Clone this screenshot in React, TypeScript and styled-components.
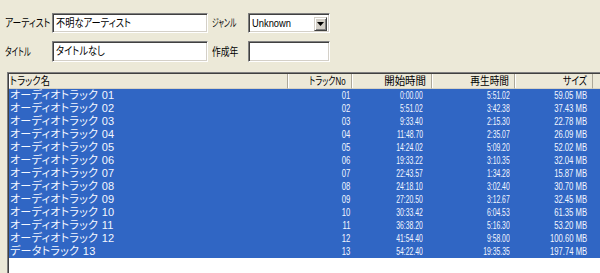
import styled, { createGlobalStyle } from "styled-components"

const GlobalStyle = createGlobalStyle`
    html, body {
        margin: 0;
        padding: 0;
        background-color: #ECE9D8;
    }
`

const Page = styled.div`
    width: 600px;
    height: 273px;
    overflow: hidden;
    padding-top: 13px;
    box-sizing: border-box;
    background-color: #ECE9D8;
    font-family: "Liberation Sans", "Noto Sans CJK JP", sans-serif;
    font-size: 11px;
    font-feature-settings: "palt";
    color: #000;
`

const Form = styled.div`
    display: grid;
    grid-template-columns: 47px 156px 40px 82px;
    grid-auto-rows: 20px 21px;
    row-gap: 8px;
    padding-left: 5px;
    align-items: center;
`

const Label = styled.div<{ $indent?: number }>`
    padding-left: ${p => p.$indent ?? 0}px;
    white-space: nowrap;
    line-height: 14px;
`

// the old UI font is much narrower than anything installed, so text gets squeezed
const Squeeze = styled.span<{ $scale?: number; $origin?: "left" | "right" }>`
    display: inline-block;
    white-space: nowrap;
    transform: scaleX(${p => p.$scale ?? 0.84});
    transform-origin: ${p => p.$origin ?? "left"} center;
`

const TextBox = styled.div`
    height: 100%;
    box-sizing: border-box;
    background: #fff;
    border-top: 1px solid #808080;
    border-left: 1px solid #808080;
    border-right: 1px solid #fff;
    border-bottom: 1px solid #fff;
    box-shadow: inset 1px 1px 0 #404040, inset -1px -1px 0 #D4D0C8;
    padding: 2px 0 0 3px;
    line-height: 14px;
    white-space: nowrap;
    overflow: hidden;
`

const Combo = styled(TextBox)`
    display: flex;
    align-items: center;
    justify-content: space-between;
    padding: 0 2px 0 3px;
`

const DropButton = styled.div`
    width: 13px;
    height: 14px;
    margin-top: 1px;
    box-sizing: border-box;
    background: #D4D0C8;
    border-top: 1px solid #D4D0C8;
    border-left: 1px solid #D4D0C8;
    border-right: 1px solid #404040;
    border-bottom: 1px solid #404040;
    box-shadow: inset 1px 1px 0 #fff, inset -1px -1px 0 #808080;
    display: flex;
    align-items: center;
    justify-content: center;
`

const ListView = styled.div`
    margin: 10px 0 0 7px;
    width: 610px;
    height: 220px;
    box-sizing: border-box;
    background: #fff;
    border-top: 1px solid #808080;
    border-left: 1px solid #808080;
    box-shadow: inset 1px 1px 0 #404040;
    padding: 1px 0 0 1px;
`

const Row = styled.div<{ $header?: boolean }>`
    display: grid;
    grid-template-columns: 279px 64px 80px 83px 78px 1fr;
    height: ${p => (p.$header ? 15 : 13)}px;
    line-height: 13px;
    background: ${p => (p.$header ? "#ECE9D8" : "#3066C4")};
    color: ${p => (p.$header ? "#000" : "#F4F7FF")};
    white-space: nowrap;
`

const HeadCell = styled.div<{ $align?: "left" | "right"; $pad?: number }>`
    box-sizing: border-box;
    height: 15px;
    padding: 1px ${p => p.$pad ?? 5}px 0 1px;
    text-align: ${p => p.$align ?? "right"};
    border-right: 1px solid #ACA899;
    border-bottom: 1px solid #D6D2C2;
    box-shadow: inset 1px 0 0 #fff;
    overflow: hidden;
`

const HeadFiller = styled.div`
    height: 15px;
    box-sizing: border-box;
    border-bottom: 1px solid #D6D2C2;
`

const Cell = styled.div<{ $pad?: number }>`
    text-align: right;
    padding: 0 ${p => p.$pad ?? 5}px 0 1px;
`

const NameCell = styled.div`
    padding-left: 1px;
    letter-spacing: 0.3px;
`

const tracks = [
    ["オーディオトラック 01", "01", "0:00.00", "5:51.02", "59.05 MB"],
    ["オーディオトラック 02", "02", "5:51.02", "3:42.38", "37.43 MB"],
    ["オーディオトラック 03", "03", "9:33.40", "2:15.30", "22.78 MB"],
    ["オーディオトラック 04", "04", "11:48.70", "2:35.07", "26.09 MB"],
    ["オーディオトラック 05", "05", "14:24.02", "5:09.20", "52.02 MB"],
    ["オーディオトラック 06", "06", "19:33.22", "3:10.35", "32.04 MB"],
    ["オーディオトラック 07", "07", "22:43.57", "1:34.28", "15.87 MB"],
    ["オーディオトラック 08", "08", "24:18.10", "3:02.40", "30.70 MB"],
    ["オーディオトラック 09", "09", "27:20.50", "3:12.67", "32.45 MB"],
    ["オーディオトラック 10", "10", "30:33.42", "6:04.53", "61.35 MB"],
    ["オーディオトラック 11", "11", "36:38.20", "5:16.30", "53.20 MB"],
    ["オーディオトラック 12", "12", "41:54.40", "9:58.00", "100.60 MB"],
    ["データトラック 13", "13", "54:22.40", "19:35.35", "197.74 MB"],
]

export default function App() {
    return (
        <Page>
            <GlobalStyle />
            <Form>
                <Label><Squeeze $scale={0.8}>アーティスト</Squeeze></Label>
                <TextBox><Squeeze>不明なアーティスト</Squeeze></TextBox>
                <Label $indent={4}><Squeeze $scale={0.62}>ジャンル</Squeeze></Label>
                <Combo>
                    <Squeeze $scale={0.85}>Unknown</Squeeze>
                    <DropButton>
                        <svg width="7" height="4" viewBox="0 0 7 4">
                            <path d="M0 0h7L3.5 4z" fill="#000" />
                        </svg>
                    </DropButton>
                </Combo>
                <Label><Squeeze $scale={0.68}>タイトル</Squeeze></Label>
                <TextBox><Squeeze>タイトルなし</Squeeze></TextBox>
                <Label $indent={4}><Squeeze $scale={0.8}>作成年</Squeeze></Label>
                <TextBox />
            </Form>
            <ListView>
                <Row $header>
                    <HeadCell $align="left"><Squeeze>トラック名</Squeeze></HeadCell>
                    <HeadCell><Squeeze $origin="right" $scale={0.72}>トラックNo</Squeeze></HeadCell>
                    <HeadCell><Squeeze $origin="right" $scale={0.95}>開始時間</Squeeze></HeadCell>
                    <HeadCell><Squeeze $origin="right" $scale={0.88}>再生時間</Squeeze></HeadCell>
                    <HeadCell><Squeeze $origin="right" $scale={0.8}>サイズ</Squeeze></HeadCell>
                    <HeadFiller />
                </Row>
                {tracks.map(t => (
                    <Row key={t[1]}>
                        <NameCell>{t[0]}</NameCell>
                        <Cell $pad={2}>
                            <Squeeze $scale={0.7} $origin="right">{t[1]}</Squeeze>
                        </Cell>
                        <Cell $pad={9}>
                            <Squeeze $scale={0.62} $origin="right">{t[2]}</Squeeze>
                        </Cell>
                        <Cell $pad={5}>
                            <Squeeze $scale={0.62} $origin="right">{t[3]}</Squeeze>
                        </Cell>
                        <Cell $pad={6}>
                            <Squeeze $scale={0.7} $origin="right">{t[4]}</Squeeze>
                        </Cell>
                        <div />
                    </Row>
                ))}
            </ListView>
        </Page>
    )
}
